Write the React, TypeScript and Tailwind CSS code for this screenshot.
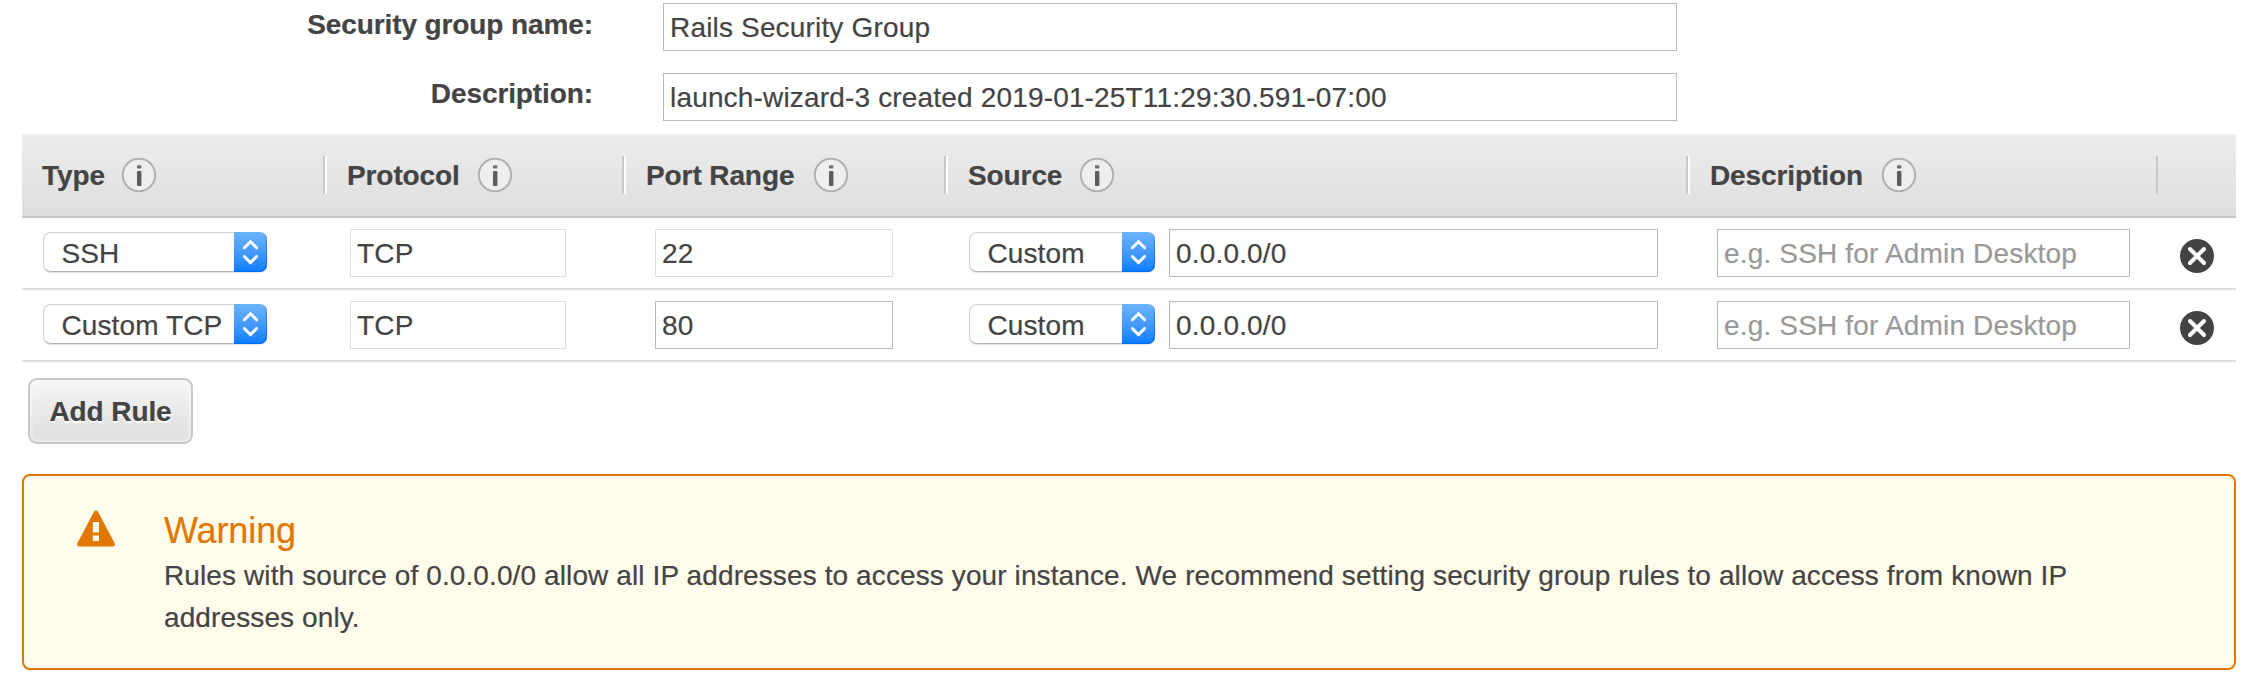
import React from "react";

const box = "h-12 border bg-white pt-[1.5px] pl-[6px] flex items-center whitespace-nowrap text-[28px] tracking-[0.17px]";

function Info() {
  return (
    <svg className="h-[36px] w-[36px] shrink-0" viewBox="0 0 36 36">
      <circle cx="18" cy="18" r="16.2" fill="#eeeeee" stroke="#b0b0b0" strokeWidth="2" />
      <rect x="16" y="8.2" width="4.4" height="3.4" rx="0.8" fill="#707070" />
      <rect x="16" y="14" width="4.4" height="15" rx="0.8" fill="#5c5c5c" />
    </svg>
  );
}

function Head({ label, w, tw }: { label: string; w: string; tw: string }) {
  return (
    <div className={"flex shrink-0 items-center " + w}>
      <span className={"shrink-0 whitespace-nowrap pt-[2px] tracking-[-0.1px] " + tw}>{label}</span>
      <Info />
    </div>
  );
}

function Sep() {
  return <div className="h-[38px] w-1 shrink-0 border-r-2 border-l-2 border-l-[#c8c8c8] border-r-white" />;
}

function Select({ value, w }: { value: string; w: string }) {
  return (
    <div className={"-mt-[2px] flex h-10 items-stretch rounded-[8px] shadow-[0_1px_1px_rgba(0,0,0,0.12)] " + w}>
      <span className="flex flex-1 items-center whitespace-nowrap rounded-l-[8px] border border-r-0 border-[#d0d0d0] border-b-[#b4b4b4] bg-white pt-[3px] pl-[17.5px] text-[28px] leading-[36px] tracking-[0.1px]">
        {value}
      </span>
      <svg
        className="h-10 w-[33px] shrink-0 rounded-r-[7px] bg-linear-to-b from-[#6cb3fa] to-[#047dff] shadow-[inset_-1px_-1px_0_rgba(0,70,230,0.35)]"
        viewBox="0 0 33 40"
        fill="none"
        stroke="white"
        strokeWidth="3"
        strokeLinecap="round"
        strokeLinejoin="round"
      >
        <path d="M10.4 15.8 L16.5 9.7 L22.6 15.8 M10.4 24.5 L16.5 30.6 L22.6 24.5" />
      </svg>
    </div>
  );
}

function Row({ type, port, fixed }: { type: string; port: string; fixed: boolean }) {
  return (
    <div className="flex h-[72px] items-center border-b-2 border-[#dedede]">
      <Select value={type} w="ml-[21px] w-[224px]" />
      <div className={box + " ml-[83px] w-[216px] border-[#dedede]"}>TCP</div>
      <div className={box + " ml-[89px] w-[238px] " + (fixed ? "border-[#dedede]" : "border-[#bababa]")}>{port}</div>
      <Select value="Custom" w="ml-[76px] w-[186px]" />
      <div className={box + " ml-[14px] w-[489px] border-[#bababa]"}>0.0.0.0/0</div>
      <div className={box + " ml-[59px] w-[413px] border-[#bababa] text-[#999]"}>e.g. SSH for Admin Desktop</div>
      <svg className="ml-[50px] mt-[6px] h-[34px] w-[34px]" viewBox="0 0 34 34">
        <circle cx="17" cy="17" r="17" fill="#444" />
        <path d="M10 10 L24 24 M24 10 L10 24" stroke="white" strokeWidth="4" strokeLinecap="round" />
      </svg>
    </div>
  );
}

export default function App() {
  return (
    <div className="h-[686px] w-[2260px] overflow-hidden bg-white px-[22px] pt-[3px] font-['Liberation_Sans',Arial,sans-serif] text-[#444] [-webkit-text-stroke:0.2px]">
      <div className="flex h-[70px]">
        <div className="w-[571px] pt-px text-right text-[28px] leading-[42px] font-bold tracking-[-0.1px]">Security group name:</div>
        <div className={box + " ml-[70px] w-[1014px] border-[#bababa]"}>Rails Security Group</div>
      </div>
      <div className="flex h-[61px]">
        <div className="w-[571px] text-right text-[28px] leading-[42px] font-bold tracking-[-0.1px]">Description:</div>
        <div className={box + " ml-[70px] w-[1014px] border-[#bababa]"}>launch-wizard-3 created 2019-01-25T11:29:30.591-07:00</div>
      </div>
      <div className="w-[2214px]">
        <div className="flex h-[84px] items-center border-b-2 border-[#c8c8c8] bg-linear-to-b from-[#ededed] to-[#dedede] pl-[20px] text-[28px] font-bold">
          <Head label="Type" w="w-[281px]" tw="w-[79px]" />
          <Sep />
          <Head label="Protocol" w="w-[295px] pl-[20px]" tw="w-[130px]" />
          <Sep />
          <Head label="Port Range" w="w-[318px] pl-[20px]" tw="w-[167px]" />
          <Sep />
          <Head label="Source" w="w-[738px] pl-[20px]" tw="w-[111px]" />
          <Sep />
          <Head label="Description" w="w-[466px] pl-[20px]" tw="w-[171px]" />
          <div className="h-[38px] w-[2px] bg-[#c8c8c8]" />
        </div>
        <Row type="SSH" port="22" fixed />
        <Row type="Custom TCP" port="80" fixed={false} />
      </div>
      <button className="mt-4 ml-[6px] block h-[66px] w-[165px] rounded-[9px] border-2 border-[#c8c8c8] bg-linear-to-b from-[#f5f5f5] to-[#dedede] pt-[2px] text-[28px] font-bold tracking-[-0.1px] shadow-[inset_0_0_4px_1px_rgba(255,255,255,0.6)] [text-shadow:0_2px_0_white]">
        Add Rule
      </button>
      <div className="mt-[30px] flex h-[196px] w-[2214px] rounded-[8px] border-2 border-[#e07700] bg-[#fffceb]">
        <svg className="mt-[34px] ml-[52px] h-[38px] w-[40px] shrink-0" viewBox="0 0 40 38">
          <path d="M20 2.8 L36.6 34.2 H3.4 Z" fill="#e07700" stroke="#e07700" strokeWidth="4.6" strokeLinejoin="round" />
          <path d="M16.8 12 H23 V22.6 H16.8 Z M16.8 25.6 H23 V31 H16.8 Z" fill="#fffceb" />
        </svg>
        <div className="ml-[48px] pt-[33px]">
          <div className="text-[36px] leading-[44px] tracking-[-0.1px] text-[#e07700]">Warning</div>
          <div className="mt-[2px] w-[1960px] whitespace-nowrap text-[28px] leading-[42px] tracking-[0.11px]">
            Rules with source of 0.0.0.0/0 allow all IP addresses to access your instance. We recommend setting security group rules to allow access from known IP
            <br />
            addresses only.
          </div>
        </div>
      </div>
    </div>
  );
}
